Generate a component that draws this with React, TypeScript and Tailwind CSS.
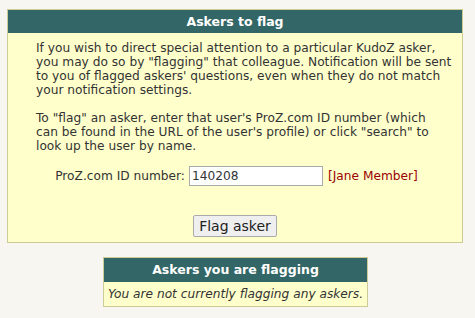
export default function App() {
  return (
    <div className="min-h-[318px] bg-[#f7f6f1] pt-[9px] pl-[7px] font-['DejaVu_Sans',Verdana,sans-serif] text-[12.2px] leading-[14px] text-[#333333]">
      <div className="w-[456px] border border-[#cccc99] bg-[#ffffcc]">
        <div className="flex h-[23px] items-center justify-center bg-[#336666] text-[12.5px] font-bold text-white">
          Askers to flag
        </div>
        <div className="px-[28px] pt-[8px] pb-[5px] whitespace-nowrap">
          <p>
            If you wish to direct special attention to a particular KudoZ asker,
            <br />
            you may do so by "flagging" that colleague. Notification will be sent
            <br />
            to you of flagged askers' questions, even when they do not match
            <br />
            your notification settings.
          </p>
          <p className="mt-[14px]">
            To "flag" an asker, enter that user's ProZ.com ID number (which
            <br />
            can be found in the URL of the user's profile) or click "search" to
            <br />
            look up the user by name.
          </p>
          <div className="mt-[13px] flex items-center justify-center gap-[4px] pl-[3px]">
            <span>ProZ.com ID number:</span>
            <input
              defaultValue="140208"
              className="h-[20px] w-[134px] border border-[#aaaaaa] bg-white px-[2px] text-[12.2px] text-[#333333] outline-none"
            />
            <span className="ml-[1px] text-[#990000]">[Jane Member]</span>
          </div>
          <div className="mt-[29px] flex justify-center">
            <button className="h-[22px] w-[84px] rounded-[2px] border border-[#aaaaaa] bg-[#efefef] text-[14px] text-[#222222]">
              Flag asker
            </button>
          </div>
        </div>
      </div>
      <div className="ml-[96px] mt-[14px] w-[265px] border border-[#cccc99] bg-[#ffffcc]">
        <div className="flex h-[24px] items-center justify-center bg-[#336666] text-[12.5px] font-bold text-white">
          Askers you are flagging
        </div>
        <div className="flex h-[24px] items-center justify-center whitespace-nowrap italic">
          You are not currently flagging any askers.
        </div>
      </div>
    </div>
  );
}
